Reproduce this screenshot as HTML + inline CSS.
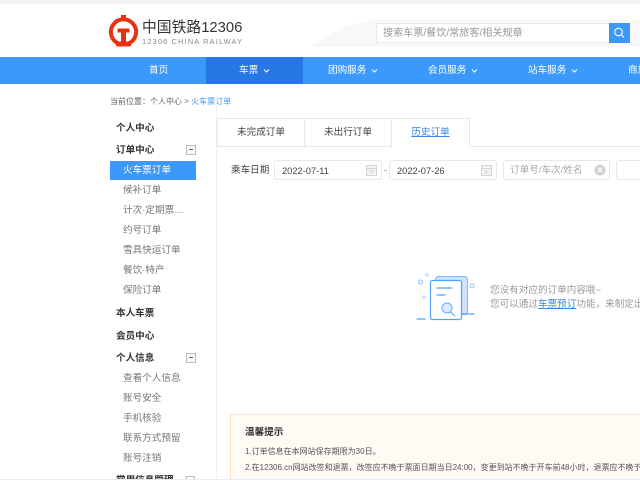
<!DOCTYPE html>
<html lang="zh"><head><meta charset="utf-8"><style>
html,body{margin:0;padding:0;background:#fff}
body{width:640px;height:480px;overflow:hidden;position:relative;font-family:"Liberation Sans","Noto Sans CJK SC",sans-serif;font-size:9.6px;color:#333}
#w{position:absolute;left:0;top:0;width:640px;height:480px;overflow:hidden;filter:blur(.35px)}
.a{position:absolute;white-space:nowrap}
.n{top:57px;height:27px;line-height:28px;color:#fff;font-size:9.600px}
.s{left:116px;font-weight:bold;font-size:9.600px;line-height:18px;color:#333}
.i{left:123px;font-size:9.600px;line-height:18px;color:#777}
.b{left:186px;width:8px;height:8px;border:1px solid #bbb;background:#f8f8f8}
.b:after{content:"";position:absolute;left:2px;top:3px;width:4px;height:1px;background:#666}
.f{top:160px;height:20px;box-sizing:border-box;border:1px solid #e8e8e8;border-radius:3px;line-height:20px;font-size:9.300px;color:#444}
.t{top:118px;height:29px;line-height:28px;text-align:center;color:#444;font-size:9.600px;box-sizing:border-box;border:1px solid #e8e8e8;border-left:0;background:#fff}
</style></head><body><div id="w">
<div class="a" style="left:0;top:0;width:640px;height:4px;background:#f3f3f3"></div>
<svg class="a" style="left:300px;top:15px" width="340" height="32"><path d="M10 32C30 18 50 6 80 5H340V32Z" fill="#f8f8f8"/></svg>
<svg class="a" style="left:108px;top:14px" width="32" height="35" viewBox="0 0 32 35" fill="none"><path d="M10.500 29.500A12.600 12.600 0 1 1 20.500 29.500" stroke="#e8320f" stroke-width="4"/><rect x="13" y="1" width="5" height="4" fill="#e8320f"/><path d="M9.500 14.500H21.500V18.500H18V27.500H21V32.500H10V27.500H13V18.500H9.500Z" fill="#e8320f"/><path d="M8 31H23" stroke="#e8320f" stroke-width="2.500"/></svg>
<div class="a" style="left:142px;top:17px;font-size:14.800px;line-height:22px;color:#333">中国铁路12306</div>
<div class="a" style="left:142px;top:37px;font-size:7.500px;line-height:10px;color:#888;letter-spacing:1.100px">12306 CHINA RAILWAY</div>
<div class="a" style="left:376px;top:23px;width:234px;height:20px;box-sizing:border-box;border:1px solid #e9e9e9;background:#fff;line-height:19px;padding-left:6px;color:#999;font-size:10.100px">搜索车票/餐饮/常旅客/相关规章</div>
<div class="a" style="left:609px;top:23px;width:21px;height:20px;background:#3b99fc"><svg width="21" height="20"><circle cx="9.500" cy="9" r="3.800" fill="none" stroke="#fff" stroke-width="1.100"/><path d="M12.500 12L15 14.500" stroke="#fff" stroke-width="1.100"/></svg></div>
<div class="a" style="left:0;top:57px;width:640px;height:27px;background:#3b99fc"></div>
<div class="a" style="left:206px;top:57px;width:97px;height:27px;background:#2676e3"></div>
<div class="a n" style="left:149px">首页</div>
<div class="a n" style="left:239px">车票</div>
<div class="a n" style="left:328px">团购服务</div>
<div class="a n" style="left:428px">会员服务</div>
<div class="a n" style="left:528px">站车服务</div>
<div class="a n" style="left:628px;width:12px;overflow:hidden">商旅</div>
<svg class="a" style="left:0;top:57px" width="640" height="27" fill="none" stroke="#fff" stroke-width="1"><path d="M264 12.500L266.500 15L269 12.500M372 12.500L374.500 15L377 12.500M472 12.500L474.500 15L477 12.500M572 12.500L574.500 15L577 12.500"/></svg>
<div class="a" style="left:110px;top:96px;font-size:8px;line-height:12px;color:#666">当前位置：个人中心 &gt; <span style="color:#3b99fc">火车票订单</span></div>
<div class="a" style="left:216px;top:96px;width:1px;height:384px;background:#f1f1f1"></div>
<div class="a s" style="top:120px">个人中心</div>
<div class="a s" style="top:142px">订单中心</div><div class="a b" style="top:145px"></div>
<div class="a" style="left:110px;top:161px;width:86px;height:19px;background:#3b99fc"></div>
<div class="a i" style="top:162px;color:#fff">火车票订单</div>
<div class="a i" style="top:182px">候补订单</div>
<div class="a i" style="top:202px">计次·定期票…</div>
<div class="a i" style="top:222px">约号订单</div>
<div class="a i" style="top:242px">雪具快运订单</div>
<div class="a i" style="top:262px">餐饮·特产</div>
<div class="a i" style="top:282px">保险订单</div>
<div class="a s" style="top:305px">本人车票</div>
<div class="a s" style="top:328px">会员中心</div>
<div class="a s" style="top:350px">个人信息</div><div class="a b" style="top:353px"></div>
<div class="a i" style="top:370px">查看个人信息</div>
<div class="a i" style="top:390px">账号安全</div>
<div class="a i" style="top:410px">手机核验</div>
<div class="a i" style="top:430px">联系方式预留</div>
<div class="a i" style="top:450px">账号注销</div>
<div class="a" style="left:116px;top:475px;width:60px;height:5px;overflow:hidden;font-weight:bold;line-height:12px;color:#333">常用信息管理</div><div class="a" style="left:186px;top:476px;width:9px;height:4px;border:1px solid #bbb;border-bottom:0;box-sizing:border-box"></div>
<div class="a" style="left:217px;top:146px;width:423px;height:1px;background:#e8e8e8"></div>
<div class="a t" style="left:217px;width:88px;border-left:1px solid #e8e8e8">未完成订单</div>
<div class="a t" style="left:305px;width:87px">未出行订单</div>
<div class="a t" style="left:392px;width:78px;color:#3b86e0;border-bottom:1px solid #fff"><u>历史订单</u></div>
<div class="a" style="left:231px;top:163px;line-height:16px;color:#444">乘车日期</div>
<div class="a f" style="left:274px;width:108px;padding-left:7px">2022-07-11</div>
<div class="a" style="left:384px;top:164px;line-height:14px;color:#777">-</div>
<div class="a f" style="left:389px;width:108px;padding-left:7px">2022-07-26</div>
<svg class="a" style="left:365px;top:164px" width="130" height="13" fill="#f3f3f3" stroke="#d5d5d5"><rect x="1.500" y="1.500" width="10" height="10"/><path d="M1.500 4.500H11.500M4.500 6.500H8.500M4.500 8.500H8.500"/><rect x="116.500" y="1.500" width="10" height="10"/><path d="M116.500 4.500H126.500M119.500 6.500H123.500M119.500 8.500H123.500"/></svg>
<div class="a f" style="left:503px;width:107px;padding-left:6px;color:#aaa;font-size:9.600px">订单号/车次/姓名</div>
<svg class="a" style="left:593px;top:163px" width="14" height="14"><circle cx="7" cy="7" r="5.500" fill="#d4d4d4"/><path d="M5 5L9 9M9 5L5 9" stroke="#fff" stroke-width="1.200"/></svg>
<div class="a" style="left:616px;top:160px;width:24px;height:20px;box-sizing:border-box;border:1px solid #e8e8e8;border-right:0;border-radius:3px 0 0 3px"></div>
<svg class="a" style="left:416px;top:272px" width="60" height="52" fill="none" stroke-linecap="round"><rect x="19.500" y="4.500" width="32" height="38" rx="3" fill="#cfe3fb" stroke="#7ab7f7"/><rect x="14.500" y="8.500" width="31" height="39" rx="2" fill="#fff" stroke="#4fa3fb" stroke-width="1.200"/><path d="M21 16H36M21 23H29" stroke="#4fa3fb" stroke-width="1.200"/><circle cx="31" cy="36" r="5" fill="#dcebfd" stroke="#6aaef5"/><path d="M34.500 40L39 44" stroke="#4fa3fb"/><path d="M1 47H9M46 42H58" stroke="#4fa3fb" stroke-width="1.200"/><circle cx="4.500" cy="10" r="2" stroke="#8dc0f8"/><circle cx="56" cy="14" r="2" stroke="#8dc0f8"/><path d="M9 3H13M11 1V5M6 25H10M8 23V27" stroke="#b5d6fb"/></svg>
<div class="a" style="left:490px;top:284px;line-height:14px;font-size:9.600px;color:#999">您没有对应的订单内容哦~</div>
<div class="a" style="left:490px;top:298px;line-height:14px;font-size:9.600px;color:#999">您可以通过<span style="color:#3b86e0;text-decoration:underline">车票预订</span>功能，来制定出</div>
<div class="a" style="left:230px;top:414px;width:410px;height:66px;box-sizing:border-box;border:1px solid #fbe4c8;border-right:0;border-bottom:0;background:#fffaf4"></div>
<div class="a" style="left:245px;top:426px;font-size:9.600px;font-weight:bold;line-height:14px;color:#333">温馨提示</div>
<div class="a" style="left:245px;top:446px;font-size:8px;line-height:12px;color:#555">1.订单信息在本网站保存期限为30日。</div>
<div class="a" style="left:245px;top:462px;font-size:8px;line-height:12px;color:#555">2.在12306.cn网站改签和退票，改签应不晚于票面日期当日24:00，变更到站不晚于开车前48小时，退票应不晚于</div>
<div class="a" style="left:0;top:479px;width:640px;height:1px;background:#e4edf2"></div>
</div></body></html>
